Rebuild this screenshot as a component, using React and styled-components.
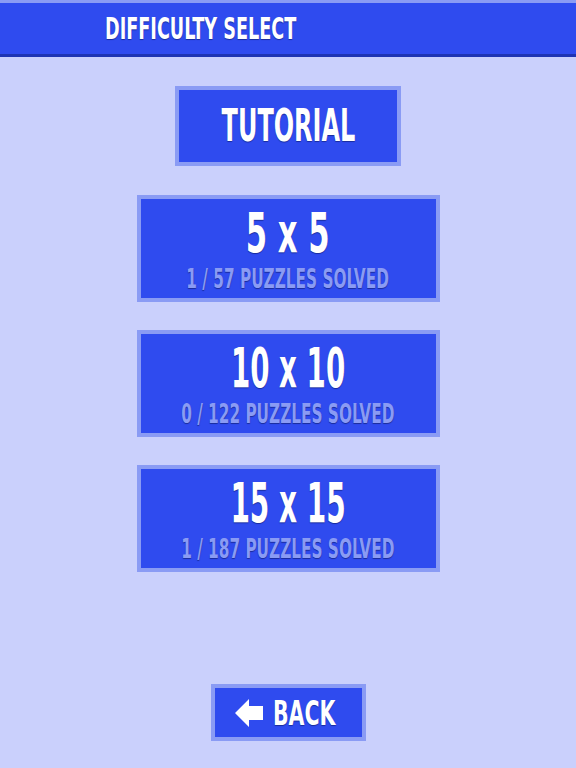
import React from "react";
import styled, { createGlobalStyle } from "styled-components";

const Global = createGlobalStyle`
  html, body { margin: 0; padding: 0; background: #cad0fc; }
  body { font-family: "DejaVu Sans", "Liberation Sans", sans-serif; }
`;

const Page = styled.div`
  width: 576px;
  height: 768px;
  background: #cad0fc;
  display: flex;
  flex-direction: column;
  align-items: center;
`;

const Header = styled.header`
  align-self: stretch;
  height: 51px;
  border-top: 3px solid #8a9bf4;
  border-bottom: 3px solid #1e34b3;
  background: #2f4bef;
  display: flex;
  align-items: center;
  padding-left: 105px;
`;

const Label = styled.span`
  display: inline-block;
  white-space: nowrap;
  font-family: "DejaVu Sans", sans-serif;
  font-stretch: condensed;
  font-weight: bold;
  line-height: 1;
  color: ${(p) => p.$color || "#fff"};
  font-size: ${(p) => p.$size}px;
  transform: scaleX(${(p) => p.$sx});
  transform-origin: ${(p) => (p.$left ? "left center" : "center")};
  text-shadow: 0 1px 1px rgba(10, 20, 90, 0.55);
`;

const Btn = styled.button`
  box-sizing: border-box;
  width: ${(p) => p.$w}px;
  height: ${(p) => p.$h}px;
  margin-top: ${(p) => p.$mt}px;
  background: #2f4bef;
  border: 4px solid #8a9bf4;
  padding: 0;
  display: flex;
  flex-direction: column;
  align-items: center;
  justify-content: center;
  gap: ${(p) => p.$gap || 0}px;
  font-family: inherit;
  cursor: pointer;
`;

const BackBtn = styled.button`
  box-sizing: border-box;
  width: 155px;
  height: 57px;
  margin-bottom: 27px;
  background: #2f4bef;
  border: 4px solid #8a9bf4;
  padding: 0 0 0 20px;
  display: flex;
  align-items: center;
  gap: 10px;
  cursor: pointer;
`;

const Spacer = styled.div`
  flex: 1;
`;

const Arrow = () => (
  <svg width="28" height="28" viewBox="0 0 28 28" style={{ flex: "none" }}>
    <path d="M0 14 L14 0 L14 7 L28 7 L28 21 L14 21 L14 28 Z" fill="#fff" />
  </svg>
);

const levels = [
  { size: "5 x 5", sx: 0.62, solved: "1 / 57 PUZZLES SOLVED" },
  { size: "10 x 10", sx: 0.56, solved: "0 / 122 PUZZLES SOLVED" },
  { size: "15 x 15", sx: 0.565, solved: "1 / 187 PUZZLES SOLVED" },
];

export default function App() {
  return (
    <Page>
      <Global />
      <Header>
        <Label $size={31} $sx={0.633} $left>DIFFICULTY SELECT</Label>
      </Header>
      <Btn $w={226} $h={80} $mt={29}>
        <Label $size={44} $sx={0.605}>TUTORIAL</Label>
      </Btn>
      {levels.map((l, i) => (
        <Btn key={l.size} $w={303} $h={107} $mt={i === 0 ? 29 : 28} $gap={5}>
          <Label $size={55} $sx={l.sx}>{l.size}</Label>
          <Label $size={26} $sx={0.655} $color="#8a9bf4">{l.solved}</Label>
        </Btn>
      ))}
      <Spacer />
      <BackBtn>
        <Arrow />
        <Label $size={34} $sx={0.67} $left>BACK</Label>
      </BackBtn>
    </Page>
  );
}
